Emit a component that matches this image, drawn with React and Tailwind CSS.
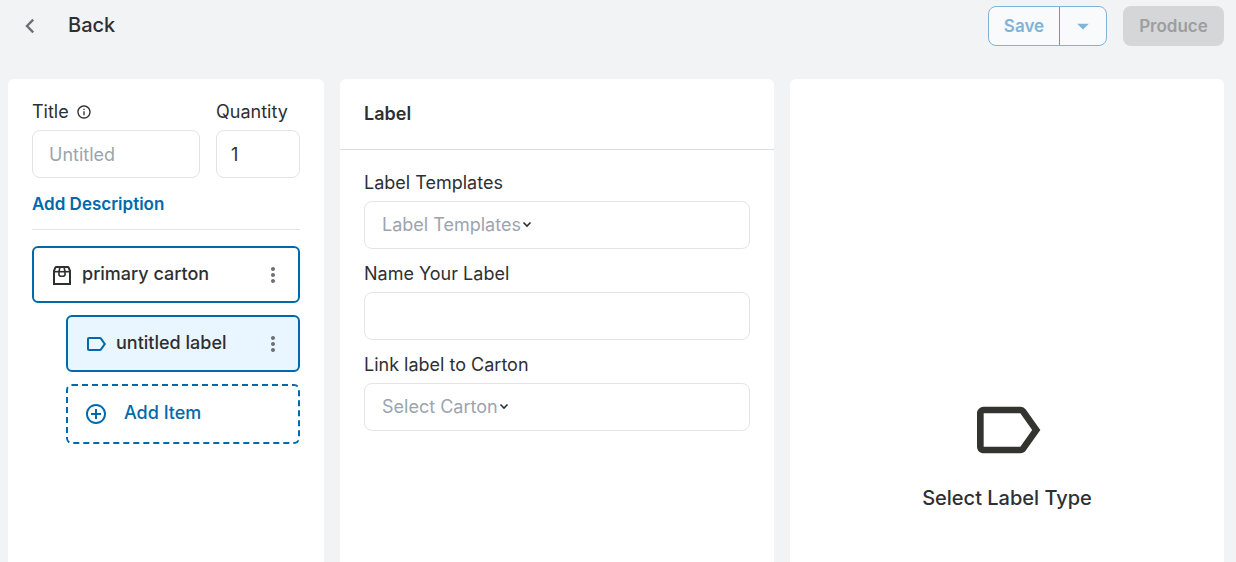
import {
  MdAddCircleOutline,
  MdArrowDropDown,
  MdInfoOutline,
  MdLabelOutline,
  MdMoreVert,
} from "react-icons/md";

function BackIcon() {
  return (
    <svg viewBox="0 0 24 24" className="size-6 shrink-0 text-[#6d6f75]" fill="none" stroke="currentColor" strokeWidth="2.4" aria-hidden="true">
      <path d="M15.200 5.700L9 12L15.200 18.300" />
    </svg>
  );
}

function CartonIcon() {
  return (
    <svg viewBox="0 0 24 24" className="size-6 shrink-0 text-[#2e2f32]" fill="none" stroke="currentColor" strokeWidth="2" aria-hidden="true">
      <path d="M4 21V8L5.200 4.800Q5.500 4 6.400 4H17.600Q18.500 4 18.800 4.800L20 8V21Z" />
      <path d="M4 8.700H20" strokeWidth="1.600" />
      <path d="M10 4L9 8.700V12.200L10.200 13.200H13.800L15 12.200V8.700L14 4" strokeWidth="1.600" />
    </svg>
  );
}

function SelectField({ id, label, placeholder }) {
  return (
    <div className="flex flex-col gap-1.5">
      <label htmlFor={id}>{label}</label>
      <div className="flex h-12 items-center rounded-lg border border-[#e3e4e5] pl-[17px]">
        <select id={id} defaultValue="" className="field-sizing-content appearance-none bg-transparent text-[#9ba5ae] outline-none">
          <option value="">{placeholder}</option>
        </select>
        <svg viewBox="0 0 12 12" className="size-3 shrink-0" fill="none" stroke="#2e2f32" strokeWidth="1.6" aria-hidden="true">
          <path d="M2.500 3.500L6 7L9.500 3.500" />
        </svg>
      </div>
    </div>
  );
}

export default function App() {
  return (
    <div className="flex min-h-screen flex-col bg-[#f2f3f5] pl-2 pr-3 font-['Inter',sans-serif] text-lg leading-6 text-[#2e2f32]">
      <header className="flex items-start justify-between pt-1.5 pb-[33px]">
        <button type="button" className="flex h-10 items-center gap-[26px] pl-2.5 text-xl leading-6 font-medium">
          <BackIcon />
          <span className="pb-0.5">Back</span>
        </button>
        <div className="flex gap-4 text-[17px] font-semibold">
          <div className="flex h-10 rounded-lg border border-[#7fb4d8] bg-[#f9fafb] text-[#7fb4d8]">
            <button type="button" disabled className="w-[71px] border-r border-[#5b9cc8]">Save</button>
            <button type="button" disabled aria-label="More save options" className="flex w-[46px] items-center justify-center">
              <MdArrowDropDown className="size-7" />
            </button>
          </div>
          <button type="button" disabled className="h-10 w-[101px] rounded-lg bg-[#d5d6d8] text-[#9d9ea0]">Produce</button>
        </div>
      </header>

      <main className="grid grow grid-cols-[316px_1fr_1fr] gap-4">
        <section className="rounded-t-md bg-white px-6 pt-[21px]">
          <div className="grid grid-cols-[2fr_1fr] gap-4">
            <div className="flex min-w-0 flex-col gap-1.5">
              <label htmlFor="title" className="flex items-center gap-[7px]">
                Title
                <MdInfoOutline className="size-4" />
              </label>
              <input id="title" type="text" placeholder="Untitled" className="h-12 w-full rounded-lg border border-[#e3e4e5] px-4 outline-none placeholder:text-[#9ba5ae]" />
            </div>
            <div className="flex min-w-0 flex-col gap-1.5">
              <label htmlFor="quantity">Quantity</label>
              <input id="quantity" type="text" inputMode="numeric" defaultValue="1" className="h-12 w-full rounded-lg border border-[#e3e4e5] px-3.5 outline-none" />
            </div>
          </div>
          <div className="border-b border-[#e3e4e5] pt-3.5 pb-[13px]">
            <button type="button" className="block text-[17px] leading-6 font-semibold text-[#0069aa]">Add Description</button>
          </div>

          <div className="flex flex-col gap-3 pt-4 font-medium">
            <div className="flex h-[57px] items-center rounded-md border-2 border-[#0069aa] pr-[13px] pl-4">
              <CartonIcon />
              <span className="grow pb-0.5 pl-2">primary carton</span>
              <button type="button" aria-label="Carton actions">
                <MdMoreVert className="size-6 text-[#6d6f75]" />
              </button>
            </div>
            <div className="ml-[34px] flex h-[57px] items-center rounded-md border-2 border-[#0069aa] bg-[#e9f6ff] pr-[13px] pl-4">
              <MdLabelOutline className="size-6 text-[#0069aa]" />
              <span className="grow pb-0.5 pl-2">untitled label</span>
              <button type="button" aria-label="Label actions">
                <MdMoreVert className="size-6 text-[#6d6f75]" />
              </button>
            </div>
            <button type="button" className="ml-[34px] flex h-[60px] items-center gap-4 rounded-md border-2 border-dashed border-[#0069aa] pl-4 text-[#0069aa]">
              <MdAddCircleOutline className="size-6" />
              <span className="pb-0.5">Add Item</span>
            </button>
          </div>
        </section>

        <section className="rounded-t-md bg-white">
          <h2 className="border-b border-[#dcdde0] px-6 py-[23px] font-semibold">Label</h2>
          <div className="flex flex-col gap-[13px] px-6 pt-[21px]">
            <SelectField id="template" label="Label Templates" placeholder="Label Templates" />
            <div className="flex flex-col gap-1.5">
              <label htmlFor="label-name">Name Your Label</label>
              <input id="label-name" type="text" className="h-12 w-full rounded-lg border border-[#e3e4e5] px-4 outline-none" />
            </div>
            <SelectField id="carton" label="Link label to Carton" placeholder="Select Carton" />
          </div>
        </section>

        <section className="flex flex-col items-center gap-4 rounded-t-md bg-white pt-[311px]">
          <MdLabelOutline className="size-20 text-[#33332f]" />
          <p className="text-xl leading-6 font-medium">Select Label Type</p>
        </section>
      </main>
    </div>
  );
}
